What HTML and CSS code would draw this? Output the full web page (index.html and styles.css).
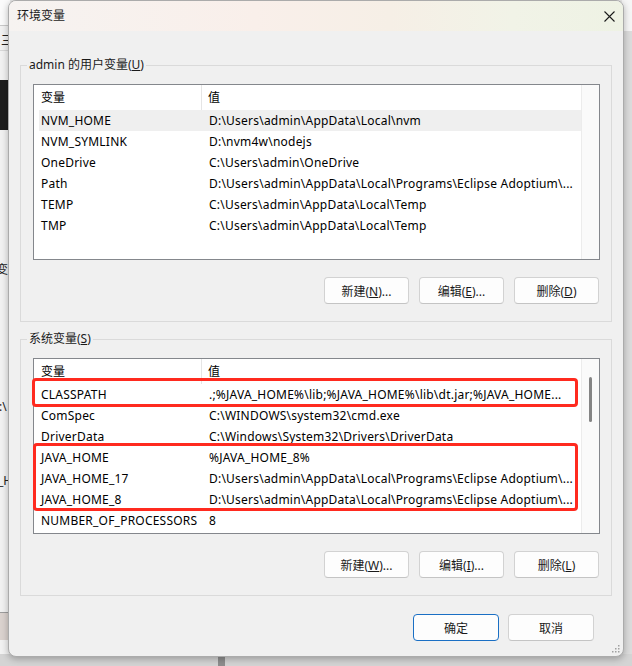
FILE: index.html
```html
<!DOCTYPE html>
<html lang="zh-CN">
<head>
<meta charset="utf-8">
<title>环境变量</title>
<link rel="stylesheet" href="styles.css">
</head>
<body>
<div class="desktop">
  <div class="bg-left"></div>
  <div class="bg-left-top"></div>
  <div class="bg-hline h1"></div>
  <div class="bg-hline h2"></div>
  <span class="bg-txt t1">三</span>
  <div class="bg-dark"></div>
  <span class="bg-txt t2">变</span>
  <span class="bg-txt t3">:\</span>
  <span class="bg-txt t4">_H</span>
  <div class="bg-tan"></div>
  <div class="bg-right"></div>
  <div class="bg-right-top"></div>
  <div class="bg-bottom"></div>
  <div class="bg-bottom-bar"></div>
</div>

<div class="dialog">
  <div class="titlebar">
    <span class="title">环境变量</span>
    <span class="close">
      <svg width="11" height="11" viewBox="0 0 11 11"><path d="M0.5 0.5 L10.5 10.5 M10.5 0.5 L0.5 10.5" stroke="#1b1b1b" stroke-width="1.1" fill="none"/></svg>
    </span>
  </div>

  <div class="content">
    <div class="group">
      <span class="legend">admin 的用户变量(<u>U</u>)</span>
      <div class="list">
        <div class="list-main">
          <div class="hdr"><div class="hc1">变量</div><div class="hc2">值</div></div>
          <div class="rows">
            <div class="row sel"><span class="c1">NVM_HOME</span><span class="c2">D:\Users\admin\AppData\Local\nvm</span></div>
            <div class="row"><span class="c1">NVM_SYMLINK</span><span class="c2">D:\nvm4w\nodejs</span></div>
            <div class="row"><span class="c1">OneDrive</span><span class="c2">C:\Users\admin\OneDrive</span></div>
            <div class="row"><span class="c1">Path</span><span class="c2">D:\Users\admin\AppData\Local\Programs\Eclipse Adoptium\...</span></div>
            <div class="row"><span class="c1">TEMP</span><span class="c2">C:\Users\admin\AppData\Local\Temp</span></div>
            <div class="row"><span class="c1">TMP</span><span class="c2">C:\Users\admin\AppData\Local\Temp</span></div>
          </div>
        </div>
        <div class="vscroll"></div>
      </div>
      <div class="btns">
        <button class="btn">新建(<u>N</u>)...</button>
        <button class="btn">编辑(<u>E</u>)...</button>
        <button class="btn">删除(<u>D</u>)</button>
      </div>
    </div>

    <div class="group group2">
      <span class="legend">系统变量(<u>S</u>)</span>
      <div class="list">
        <div class="list-main">
          <div class="hdr"><div class="hc1">变量</div><div class="hc2">值</div></div>
          <div class="rows">
            <div class="row"><span class="c1">CLASSPATH</span><span class="c2">.;%JAVA_HOME%\lib;%JAVA_HOME%\lib\dt.jar;%JAVA_HOME...</span></div>
            <div class="row"><span class="c1">ComSpec</span><span class="c2">C:\WINDOWS\system32\cmd.exe</span></div>
            <div class="row"><span class="c1">DriverData</span><span class="c2">C:\Windows\System32\Drivers\DriverData</span></div>
            <div class="row"><span class="c1">JAVA_HOME</span><span class="c2">%JAVA_HOME_8%</span></div>
            <div class="row"><span class="c1">JAVA_HOME_17</span><span class="c2">D:\Users\admin\AppData\Local\Programs\Eclipse Adoptium\...</span></div>
            <div class="row"><span class="c1">JAVA_HOME_8</span><span class="c2">D:\Users\admin\AppData\Local\Programs\Eclipse Adoptium\...</span></div>
            <div class="row"><span class="c1">NUMBER_OF_PROCESSORS</span><span class="c2">8</span></div>
          </div>
        </div>
        <div class="vscroll"><div class="thumb"></div></div>
        <div class="mark mark1"></div>
        <div class="mark mark2"></div>
      </div>
      <div class="btns">
        <button class="btn">新建(<u>W</u>)...</button>
        <button class="btn">编辑(<u>I</u>)...</button>
        <button class="btn">删除(<u>L</u>)</button>
      </div>
    </div>

    <div class="footer">
      <button class="btn primary">确定</button>
      <button class="btn">取消</button>
    </div>
  </div>

  <svg class="grip" width="8" height="8" viewBox="0 0 8 8">
    <rect x="6" y="0" width="1.5" height="1.5" fill="#a0a0a0"/>
    <rect x="3" y="3" width="1.5" height="1.5" fill="#a0a0a0"/>
    <rect x="6" y="3" width="1.5" height="1.5" fill="#a0a0a0"/>
    <rect x="0" y="6" width="1.5" height="1.5" fill="#a0a0a0"/>
    <rect x="3" y="6" width="1.5" height="1.5" fill="#a0a0a0"/>
    <rect x="6" y="6" width="1.5" height="1.5" fill="#a0a0a0"/>
  </svg>
</div>
</body>
</html>
```

FILE: styles.css
```css
* { box-sizing: border-box; }
html, body { margin: 0; padding: 0; }
body {
  width: 632px;
  height: 666px;
  position: relative;
  overflow: hidden;
  background: #e6e6e6;
  font-family: "Noto Sans", "Noto Sans CJK SC", sans-serif;
  font-size: 12px;
  color: #000;
}

/* ---- desktop behind the dialog ---- */
.desktop { position: absolute; inset: 0; }
.bg-left { position: absolute; left: 0; top: 0; width: 10px; height: 666px; background: #f2f2f2; }
.bg-left-top { position: absolute; left: 0; top: 0; width: 10px; height: 25px; background: #fbfbfb; }
.bg-hline { position: absolute; left: 0; width: 10px; height: 1px; background: #c9c9c9; }
.bg-hline.h1 { top: 25px; }
.bg-hline.h2 { top: 50px; background: #d8d8d8; }
.bg-dark { position: absolute; left: 0; top: 80px; width: 10px; height: 50px; background: #1d1d1d; }
.bg-txt { position: absolute; font-size: 12px; line-height: 14px; color: #222; }
.bg-txt.t1 { left: 1px; top: 34px; }
.bg-txt.t2 { left: -4px; top: 263px; }
.bg-txt.t3 { left: -1px; top: 400px; }
.bg-txt.t4 { left: -2px; top: 474px; }
.bg-tan { position: absolute; left: 0; top: 612px; width: 10px; height: 28px; background: #dbd3cf; border-top: 1px solid #9d9d9d; }
.bg-right { position: absolute; right: 0; top: 0; width: 10px; height: 666px; background: #dcdcdc; }
.bg-right-top { position: absolute; right: 0; top: 0; width: 10px; height: 31px; background: #f6f6f6; }
.bg-bottom { position: absolute; left: 0; bottom: 0; width: 632px; height: 12px; background: #d4d4d4; }
.bg-bottom-bar { position: absolute; left: 218px; bottom: 0; width: 7px; height: 12px; background: #8e8e8e; }

/* ---- dialog window ---- */
.dialog {
  position: absolute;
  left: 8px;
  top: 0;
  width: 616px;
  height: 657px;
  background: #f0f0f0;
  border: 1px solid #ababab;
  border-radius: 8px;
  box-shadow: 0 2px 7px rgba(0, 0, 0, 0.28);
  overflow: hidden;
  display: flex;
  flex-direction: column;
}
.titlebar {
  height: 30px;
  flex: none;
  display: flex;
  align-items: center;
  justify-content: space-between;
  padding: 0 8px 0 8px;
  background: linear-gradient(90deg, #f6f3f1 0%, #f9efea 40%, #f6efe6 62%, #f1f3e7 82%, #eef2e4 100%);
}
.title { font-size: 12px; line-height: 16px; color: #1a1a1a; }
.close { display: flex; width: 12px; height: 12px; align-items: center; justify-content: center; }

.content { padding: 0 11px; flex: 1; }

.group {
  position: relative;
  margin-top: 34px;
  border: 1px solid #dadada;
  padding: 18px 11px 17px 12px;
}
.group2 { margin-top: 17px; }
.legend {
  position: absolute;
  left: 6px;
  top: -9px;
  padding: 0 2px;
  line-height: 16px;
  background: #f0f0f0;
  color: #1a1a1a;
}
u { text-decoration: underline; text-underline-offset: 1px; }

.list {
  position: relative;
  height: 176px;
  border: 1px solid #84878c;
  background: #fff;
  display: flex;
}
.list-main { flex: 1; min-width: 0; }
.hdr {
  height: 25px;
  display: grid;
  grid-template-columns: 168px 1fr;
  line-height: 25px;
}
.hc1 { padding-left: 7px; border-right: 1px solid #e5e5e5; }
.hc2 { padding-left: 6px; }
.rows { padding-left: 5px; }
.row {
  height: 21px;
  line-height: 21px;
  display: grid;
  grid-template-columns: 168px 1fr;
  letter-spacing: 0.22px;
}
.row.sel { background: #efefef; }
.c1, .c2 { padding-left: 2px; white-space: nowrap; overflow: hidden; }
.vscroll {
  position: relative;
  width: 18px;
  flex: none;
  background: #fafafa;
  border-left: 1px solid #ececec;
}
.thumb {
  position: absolute;
  left: 7px;
  top: 18px;
  width: 3px;
  height: 45px;
  border-radius: 2px;
  background: #858585;
}
.mark {
  position: absolute;
  border: 3px solid #ff2a1f;
  border-radius: 4px;
  pointer-events: none;
}
.mark1 { left: -2px; top: 19px; width: 546px; height: 29px; }
.mark2 { left: -1px; top: 84px; width: 545px; height: 68px; }

.btns {
  margin-top: 17px;
  display: flex;
  justify-content: flex-end;
  gap: 10px;
  padding-right: 1px;
}
.btn {
  width: 85px;
  height: 27px;
  padding: 0;
  font-family: inherit;
  font-size: 12px;
  color: #1a1a1a;
  background: #fdfdfd;
  border: 1px solid #d2d2d2;
  border-bottom-color: #c4c4c4;
  border-radius: 4px;
}
.footer {
  margin-top: 18px;
  display: flex;
  justify-content: flex-end;
  gap: 9px;
  padding-right: 18px;
}
.footer .btn { width: 86px; }
.btn.primary { border: 1px solid #1a6fc4; }
.grip { position: absolute; right: 3px; bottom: 3px; }
```
